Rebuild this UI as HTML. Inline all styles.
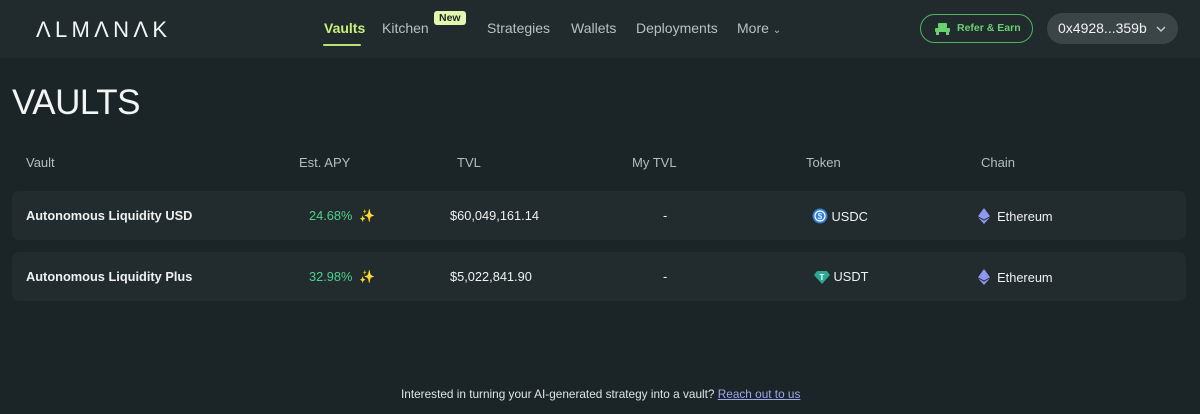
<!DOCTYPE html>
<html><head><meta charset="utf-8"><style>
*{margin:0;padding:0;box-sizing:border-box}
body{width:1200px;height:414px;background:#1b2527;font-family:"Liberation Sans",sans-serif;color:#e6e9e8;position:relative;overflow:hidden}
.hdr{position:absolute;left:0;top:0;width:1200px;height:58px;background:#212b2d}
.logo{position:absolute;left:36px;top:17px;font-size:22px;letter-spacing:4.3px;color:#f2f4f3;font-weight:400}
.nav{position:absolute;top:20px;font-size:14px;color:#b9c0bf}
.act{color:#c9ef7c;font-weight:600}
.und{position:absolute;left:323px;top:44px;width:38px;height:2px;background:#b9e07a;border-radius:1px}
.new{position:absolute;left:434px;top:11px;background:#e3f7b0;color:#1c2a1c;font-size:10.5px;font-weight:700;padding:1px 5px;border-radius:3px}
.refer{position:absolute;left:920px;top:14px;width:113px;height:29px;border:1.5px solid #4fb35d;border-radius:15px;color:#6ad06f;font-size:10.5px;font-weight:700;padding:7px 0 0 36px}
.wallet{position:absolute;left:1047px;top:13px;width:131px;height:31px;background:#3b4446;border-radius:16px;color:#f0f2f1;font-size:14px;padding:7px 0 0 11px}
h1{position:absolute;left:12px;top:83px;font-size:35px;font-weight:400;color:#f3f5f4;letter-spacing:-0.5px}
.th{position:absolute;top:155px;font-size:13px;color:#b6bcbb}
.row{position:absolute;left:12px;width:1174px;height:49px;background:#222c2e;border-radius:7px}
.c{position:absolute;font-size:12.8px;top:17px;color:#eef1f0}
.g{color:#4fcf8c}
.foot{position:absolute;top:387px;left:401px;font-size:11.8px;color:#dfe3e2}
.foot a{color:#9ca8f0;text-decoration:underline}
</style></head><body>
<div class="hdr">
<div class="logo">ΛLMΛNΛK</div>
<div class="nav act" style="left:324px">Vaults</div>
<div class="und"></div>
<div class="nav" style="left:382px">Kitchen</div>
<div class="new">New</div>
<div class="nav" style="left:487px">Strategies</div>
<div class="nav" style="left:571px">Wallets</div>
<div class="nav" style="left:636px">Deployments</div>
<div class="nav" style="left:737px">More <span style="font-size:10px">&#x2304;</span></div>
<div class="refer"><svg style="position:absolute;left:14px;top:8px" width="15" height="12" viewBox="0 0 15 12"><rect x="3" y="0" width="9" height="5" rx="1" fill="#6ad06f"/><rect x="0" y="5" width="15" height="4" rx="1" fill="#6ad06f"/><rect x="1" y="9" width="3" height="3" fill="#6ad06f"/><rect x="11" y="9" width="3" height="3" fill="#6ad06f"/></svg>Refer &amp; Earn</div>
<div class="wallet">0x4928...359b <svg style="position:absolute;left:109px;top:13px" width="10" height="6" viewBox="0 0 10 6"><path d="M1 1l4 4 4-4" stroke="#cfd4d3" stroke-width="1.3" fill="none"/></svg></div>
</div>
<h1>VAULTS</h1>
<div class="th" style="left:26px">Vault</div>
<div class="th" style="left:299px">Est. APY</div>
<div class="th" style="left:457px">TVL</div>
<div class="th" style="left:632px">My TVL</div>
<div class="th" style="left:806px">Token</div>
<div class="th" style="left:981px">Chain</div>

<div class="row" style="top:191px">
<div class="c" style="left:14px;font-weight:700">Autonomous Liquidity USD</div>
<div class="c g" style="left:297px">24.68% <span style="color:#f4d35e;margin-left:3px">✨</span></div>
<div class="c" style="left:438px">$60,049,161.14</div>
<div class="c" style="left:651px">-</div>
<div class="c" style="left:800px"><svg style="vertical-align:-3px" width="16" height="16"><circle cx="8" cy="8" r="7.5" fill="#2f7fd6"/><circle cx="8" cy="8" r="5" fill="none" stroke="#fff" stroke-width="1.2"/><text x="8" y="11" font-size="8" fill="#fff" text-anchor="middle" font-family="Liberation Sans">$</text></svg> USDC</div>
<div class="c" style="left:966px"><svg style="vertical-align:-3px" width="12" height="16"><path d="M6 0L0 8.2 6 11.5 12 8.2Z" fill="#8e98f0"/><path d="M6 12.7L0 9.3 6 16 12 9.3Z" fill="#8e98f0"/></svg>&nbsp; Ethereum</div>
</div>
<div class="row" style="top:252px">
<div class="c" style="left:14px;font-weight:700">Autonomous Liquidity Plus</div>
<div class="c g" style="left:297px">32.98% <span style="color:#f4d35e;margin-left:3px">✨</span></div>
<div class="c" style="left:438px">$5,022,841.90</div>
<div class="c" style="left:651px">-</div>
<div class="c" style="left:802px"><svg style="vertical-align:-3px" width="16" height="14"><path d="M3 1h10l3 4-8 9-8-9z" fill="#2aa894"/><text x="8" y="10" font-size="8" fill="#fff" text-anchor="middle" font-family="Liberation Sans" font-weight="bold">T</text></svg> USDT</div>
<div class="c" style="left:966px"><svg style="vertical-align:-3px" width="12" height="16"><path d="M6 0L0 8.2 6 11.5 12 8.2Z" fill="#8e98f0"/><path d="M6 12.7L0 9.3 6 16 12 9.3Z" fill="#8e98f0"/></svg>&nbsp; Ethereum</div>
</div>
<div class="foot">Interested in turning your AI-generated strategy into a vault? <a>Reach out to us</a></div>
</body></html>
